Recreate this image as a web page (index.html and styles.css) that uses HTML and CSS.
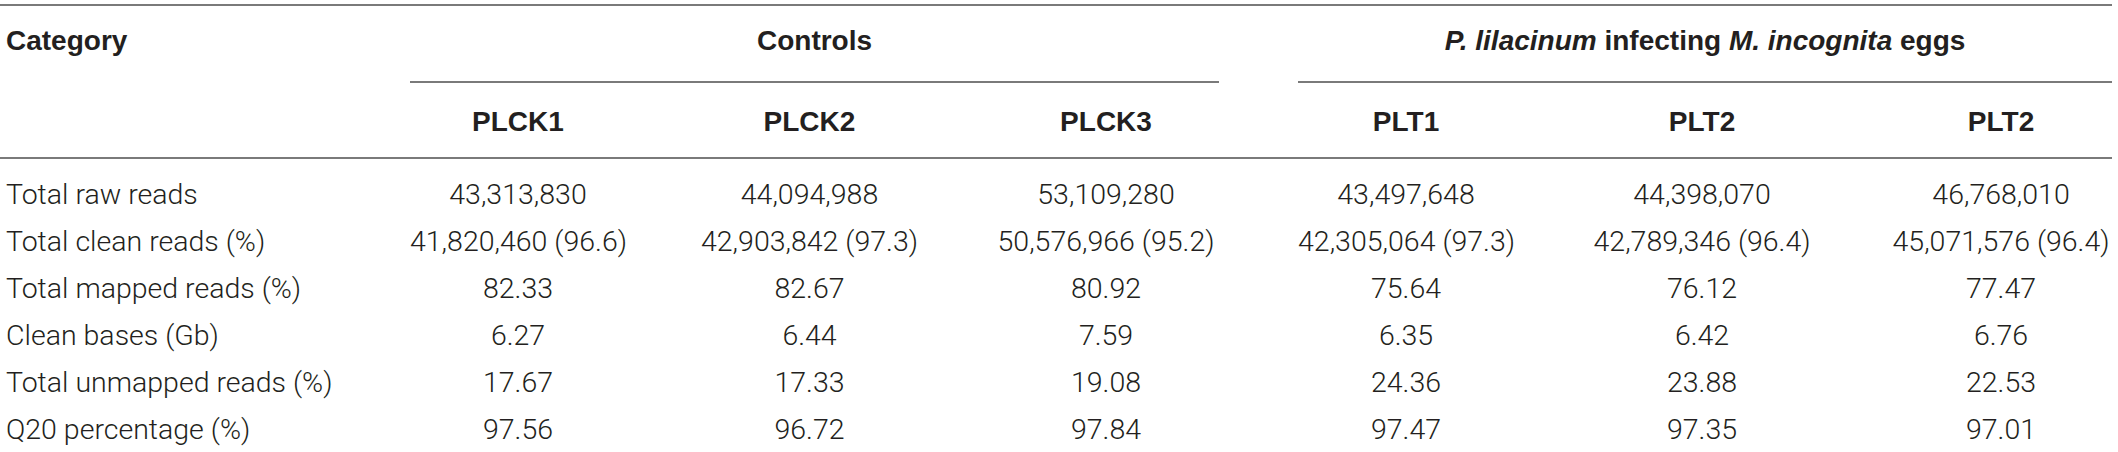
FILE: index.html
```html
<!DOCTYPE html>
<html lang="en">
<head>
<meta charset="utf-8">
<title>Sequencing statistics</title>
<link rel="stylesheet" href="styles.css">
</head>
<body>
<table class="stats">
  <colgroup>
    <col class="c-cat">
    <col class="c-a">
    <col class="c-b">
    <col class="c-c">
    <col class="c-gap">
    <col class="c-d">
    <col class="c-e">
    <col class="c-f">
  </colgroup>
  <thead>
    <tr class="row-group">
      <th class="cat">Category</th>
      <th class="group" colspan="3">Controls</th>
      <th class="gap"></th>
      <th class="group" colspan="3"><i>P. lilacinum</i> infecting <i>M. incognita</i> eggs</th>
    </tr>
    <tr class="row-sub">
      <th class="cat"></th>
      <th>PLCK1</th>
      <th>PLCK2</th>
      <th>PLCK3</th>
      <th class="gap"></th>
      <th>PLT1</th>
      <th>PLT2</th>
      <th>PLT2</th>
    </tr>
  </thead>
  <tbody>
    <tr class="first">
      <td class="cat">Total raw reads</td>
      <td>43,313,830</td><td>44,094,988</td><td>53,109,280</td><td class="gap"></td>
      <td>43,497,648</td><td>44,398,070</td><td>46,768,010</td>
    </tr>
    <tr>
      <td class="cat">Total clean reads (%)</td>
      <td>41,820,460 (96.6)</td><td>42,903,842 (97.3)</td><td>50,576,966 (95.2)</td><td class="gap"></td>
      <td>42,305,064 (97.3)</td><td>42,789,346 (96.4)</td><td>45,071,576 (96.4)</td>
    </tr>
    <tr>
      <td class="cat">Total mapped reads (%)</td>
      <td>82.33</td><td>82.67</td><td>80.92</td><td class="gap"></td>
      <td>75.64</td><td>76.12</td><td>77.47</td>
    </tr>
    <tr>
      <td class="cat">Clean bases (Gb)</td>
      <td>6.27</td><td>6.44</td><td>7.59</td><td class="gap"></td>
      <td>6.35</td><td>6.42</td><td>6.76</td>
    </tr>
    <tr>
      <td class="cat">Total unmapped reads (%)</td>
      <td>17.67</td><td>17.33</td><td>19.08</td><td class="gap"></td>
      <td>24.36</td><td>23.88</td><td>22.53</td>
    </tr>
    <tr>
      <td class="cat">Q20 percentage (%)</td>
      <td>97.56</td><td>96.72</td><td>97.84</td><td class="gap"></td>
      <td>97.47</td><td>97.35</td><td>97.01</td>
    </tr>
  </tbody>
</table>
</body>
</html>
```
FILE: styles.css
```css
html, body {
  margin: 0;
  padding: 0;
  background: #ffffff;
}

body {
  font-family: "Liberation Sans", Arial, Helvetica, sans-serif;
  font-size: 28px;
  color: #231f20;
}

.stats {
  width: 2112px;
  table-layout: fixed;
  border-collapse: separate;
  border-spacing: 0;
  margin-top: 4px;
  border-top: 2px solid #7a7a7a;
}

.c-cat { width: 410px; }
.c-a { width: 216px; }
.c-b { width: 367px; }
.c-c { width: 226px; }
.c-gap { width: 79px; }
.c-d { width: 216px; }
.c-e { width: 376px; }
.c-f { width: 222px; }

.stats th,
.stats td {
  padding: 0;
  text-align: center;
  white-space: nowrap;
}

.stats th {
  font-weight: bold;
}

.stats .cat {
  text-align: left;
  padding-left: 6px;
}

.row-group th {
  line-height: 70px;
  padding-bottom: 5px;
  vertical-align: top;
}

.row-group .group {
  border-bottom: 2px solid #7a7a7a;
}

.row-sub th {
  line-height: 71px;
  padding-top: 3px;
  border-bottom: 2px solid #7a7a7a;
}

.stats td {
  font-family: Roboto, "Liberation Sans", Arial, sans-serif;
  font-weight: 300;
  font-size: 28.5px;
  line-height: 47px;
  color: #231f20;
}

.stats tbody tr.first td {
  padding-top: 12px;
}
```
